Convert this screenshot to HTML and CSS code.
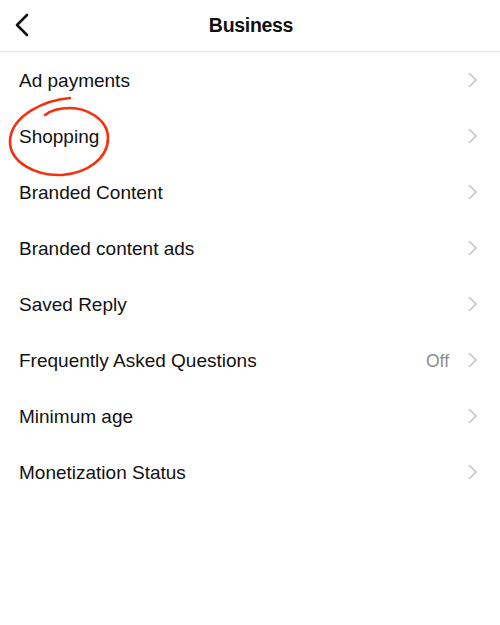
FILE: index.html
```html
<!DOCTYPE html>
<html>
<head>
<meta charset="utf-8">
<link rel="stylesheet" href="styles.css">
</head>
<body>
<div class="page">
  <header class="topbar">
    <svg class="back" width="16" height="24" viewBox="0 0 16 24"><path d="M13 2 L3 12 L13 22" fill="none" stroke="#111" stroke-width="2.6" stroke-linecap="round" stroke-linejoin="round"/></svg>
    <h1 class="title">Business</h1>
  </header>
  <ul class="list">
    <li class="row"><span class="label">Ad payments</span><span class="right"><svg class="chev" width="10" height="16" viewBox="0 0 10 16"><path d="M1.5 1.5 L8 8 L1.5 14.5" fill="none" stroke="#c4c4c4" stroke-width="1.5" stroke-linecap="round" stroke-linejoin="round"/></svg></span></li>
    <li class="row"><span class="label">Shopping</span><span class="right"><svg class="chev" width="10" height="16" viewBox="0 0 10 16"><path d="M1.5 1.5 L8 8 L1.5 14.5" fill="none" stroke="#c4c4c4" stroke-width="1.5" stroke-linecap="round" stroke-linejoin="round"/></svg></span></li>
    <li class="row"><span class="label">Branded Content</span><span class="right"><svg class="chev" width="10" height="16" viewBox="0 0 10 16"><path d="M1.5 1.5 L8 8 L1.5 14.5" fill="none" stroke="#c4c4c4" stroke-width="1.5" stroke-linecap="round" stroke-linejoin="round"/></svg></span></li>
    <li class="row"><span class="label">Branded content ads</span><span class="right"><svg class="chev" width="10" height="16" viewBox="0 0 10 16"><path d="M1.5 1.5 L8 8 L1.5 14.5" fill="none" stroke="#c4c4c4" stroke-width="1.5" stroke-linecap="round" stroke-linejoin="round"/></svg></span></li>
    <li class="row"><span class="label">Saved Reply</span><span class="right"><svg class="chev" width="10" height="16" viewBox="0 0 10 16"><path d="M1.5 1.5 L8 8 L1.5 14.5" fill="none" stroke="#c4c4c4" stroke-width="1.5" stroke-linecap="round" stroke-linejoin="round"/></svg></span></li>
    <li class="row"><span class="label">Frequently Asked Questions</span><span class="right"><span class="value">Off</span><svg class="chev" width="10" height="16" viewBox="0 0 10 16"><path d="M1.5 1.5 L8 8 L1.5 14.5" fill="none" stroke="#c4c4c4" stroke-width="1.5" stroke-linecap="round" stroke-linejoin="round"/></svg></span></li>
    <li class="row"><span class="label">Minimum age</span><span class="right"><svg class="chev" width="10" height="16" viewBox="0 0 10 16"><path d="M1.5 1.5 L8 8 L1.5 14.5" fill="none" stroke="#c4c4c4" stroke-width="1.5" stroke-linecap="round" stroke-linejoin="round"/></svg></span></li>
    <li class="row"><span class="label">Monetization Status</span><span class="right"><svg class="chev" width="10" height="16" viewBox="0 0 10 16"><path d="M1.5 1.5 L8 8 L1.5 14.5" fill="none" stroke="#c4c4c4" stroke-width="1.5" stroke-linecap="round" stroke-linejoin="round"/></svg></span></li>
  </ul>
  <svg class="scribble" width="500" height="625" viewBox="0 0 500 625"><path d="M70 98 C45 100 12 115 10 140 C9 162 35 176 62 175 C88 173 108 158 108 138 C108 118 85 108 70 108 C60 108 50 111 45 115" fill="none" stroke="#f5300f" stroke-width="2.6" stroke-linecap="round"/></svg>
</div>
</body>
</html>
```

FILE: styles.css
```css
html, body {
  margin: 0;
  padding: 0;
  background: #ffffff;
}
body {
  font-family: "Liberation Sans", Arial, sans-serif;
  color: #111111;
}
.page {
  position: relative;
  width: 500px;
  height: 625px;
  overflow: hidden;
}
.topbar {
  height: 51px;
  border-bottom: 1px solid #e8e8e8;
  display: flex;
  align-items: center;
  justify-content: center;
  position: relative;
}
.back {
  position: absolute;
  left: 14px;
  top: 13px;
}
.title {
  margin: 0;
  font-size: 19.5px;
  font-weight: 700;
  letter-spacing: -0.3px;
  color: #111;
  padding-left: 2px;
}
.list {
  list-style: none;
  margin: 0;
  padding: 0;
}
.row {
  height: 56px;
  display: flex;
  align-items: center;
  justify-content: space-between;
  padding: 2px 22px 0 19px;
  box-sizing: border-box;
}
.label {
  font-size: 19px;
  color: #111;
}
.right {
  display: flex;
  align-items: center;
  gap: 19px;
}
.value {
  font-size: 17.5px;
  color: #8e8e8e;
}
.chev {
  display: block;
  margin-top: -2px;
}
.scribble {
  position: absolute;
  left: 0;
  top: 0;
  pointer-events: none;
}
```
